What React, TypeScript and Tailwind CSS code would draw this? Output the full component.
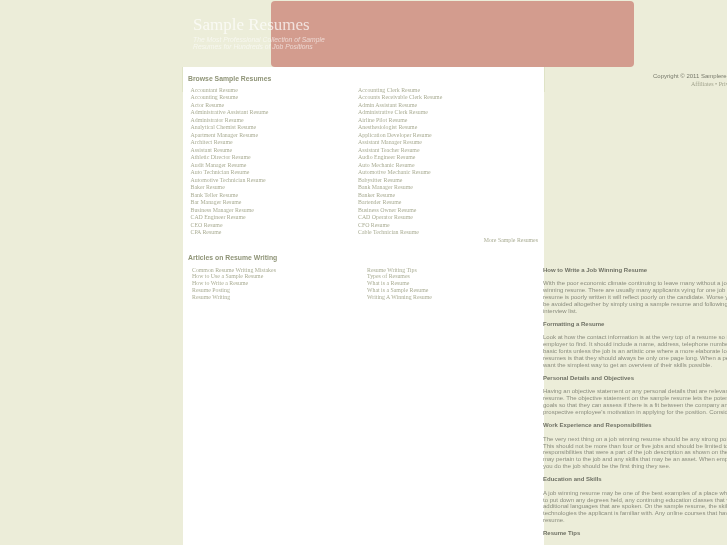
const left = [
  "Accountant Resume","Accounting Resume","Actor Resume","Administrative Assistant Resume","Administrator Resume","Analytical Chemist Resume","Apartment Manager Resume","Architect Resume","Assistant Resume","Athletic Director Resume","Audit Manager Resume","Auto Technician Resume","Automotive Technician Resume","Baker Resume","Bank Teller Resume","Bar Manager Resume","Business Manager Resume","CAD Engineer Resume","CEO Resume","CPA Resume",
];
const right = [
  "Accounting Clerk Resume","Accounts Receivable Clerk Resume","Admin Assistant Resume","Administrative Clerk Resume","Airline Pilot Resume","Anesthesiologist Resume","Application Developer Resume","Assistant Manager Resume","Assistant Teacher Resume","Audio Engineer Resume","Auto Mechanic Resume","Automotive Mechanic Resume","Babysitter Resume","Bank Manager Resume","Banker Resume","Bartender Resume","Business Owner Resume","CAD Operator Resume","CFO Resume","Cable Technician Resume",
];
const articlesLeft = ["Common Resume Writing Mistakes","How to Use a Sample Resume","How to Write a Resume","Resume Posting","Resume Writing"];
const articlesRight = ["Resume Writing Tips","Types of Resumes","What is a Resume","What is a Sample Resume","Writing A Winning Resume"];

const sections: { title: string; lines: string[] }[] = [
  { title: "How to Write a Job Winning Resume", lines: [
    "With the poor economic climate continuing to leave many without a job, it is vital to have a",
    "winning resume. There are usually many applicants vying for one job and if a person's",
    "resume is poorly written it will reflect poorly on the candidate. Worse yet it may well",
    "be avoided altogether by simply using a sample resume and following it to get on the",
    "interview list.",
  ]},
  { title: "Formatting a Resume", lines: [
    "Look at how the contact information is at the very top of a resume so it is easy for an",
    "employer to find. It should include a name, address, telephone number and email. Use",
    "basic fonts unless the job is an artistic one where a more elaborate look works. A rule for",
    "resumes is that they should always be only one page long. When a person reads it they",
    "want the simplest way to get an overview of their skills possible.",
  ]},
  { title: "Personal Details and Objectives", lines: [
    "Having an objective statement or any personal details that are relevant can help the",
    "resume. The objective statement on the sample resume lets the potential employer see",
    "goals so that they can assess if there is a fit between the company and the person and",
    "prospective employee's motivation in applying for the position. Consider this carefully.",
  ]},
  { title: "Work Experience and Responsibilities", lines: [
    "The very next thing on a job winning resume should be any strong points of experience.",
    "This should not be more than four or five jobs and should be limited to the main duties",
    "responsibilities that were a part of the job description as shown on the sample and what",
    "may pertain to the job and any skills that may be an asset. When employers look at what",
    "you do the job should be the first thing they see.",
  ]},
  { title: "Education and Skills", lines: [
    "A job winning resume may be one of the best examples of a place where it is important",
    "to put down any degrees held, any continuing education classes that were taken and any",
    "additional languages that are spoken. On the sample resume, the skills listed are the",
    "technologies the applicant is familiar with. Any online courses that have been taken help a",
    "resume.",
  ]},
  { title: "Resume Tips", lines: [
    "The sample resume is formatted so that any employer in any field can see it at a glance.",
  ]},
];

export default function App() {
  return (
    <div className="relative h-[545px] w-[727px] overflow-hidden bg-[#ecedd9] font-['Liberation_Sans',sans-serif]">
      <div className="ml-[271px] mt-px h-[66px] w-[363px] rounded-[4px] bg-[#d39c8e]" />

      <div className="absolute left-[193px] top-[15px] text-white blur-[0.3px]">
        <div className="font-['Liberation_Serif',serif] text-[17px] leading-[20.5px] opacity-70">Sample Resumes</div>
        <div className="text-[6.8px] italic leading-[7.5px] opacity-60">
          <div>The Most Professional Collection of Sample</div>
          <div>Resumes for Hundreds of Job Positions</div>
        </div>
      </div>

      <div className="flex">
        <main className="relative ml-[183px] h-[478px] w-[361px] shrink-0 bg-white pl-[5px] pr-[6px] pt-[7px]">
          <div className="absolute -left-px top-0 h-[25px] w-px bg-[#dfe3c6]" />
          <div className="absolute -right-px top-0 h-[25px] w-px bg-[#dfe3c6]" />
          <div className="blur-[0.3px]">
            <h2 className="text-[6.85px] font-bold leading-[9px] text-[#8f9477]">Browse Sample Resumes</h2>
            <div className="mt-[3.5px] grid grid-cols-[167.5px_1fr] pl-[2.5px] font-['Liberation_Serif',serif] text-[5.85px] leading-[7.5px] text-[#a9ac93]">
              <div>{left.map((t) => <div key={t}>{t}</div>)}</div>
              <div>{right.map((t) => <div key={t}>{t}</div>)}</div>
            </div>
            <div className="text-right font-['Liberation_Serif',serif] text-[5.85px] leading-[7.5px] text-[#a9ac93]">More Sample Resumes</div>
            <h2 className="mt-[9px] text-[6.85px] font-bold leading-[9px] text-[#8f9477]">Articles on Resume Writing</h2>
            <div className="mt-[4.5px] grid grid-cols-[175px_1fr] pl-[4px] font-['Liberation_Serif',serif] text-[5.85px] leading-[6.85px] text-[#a9ac93]">
              <div>{articlesLeft.map((t) => <div key={t}>{t}</div>)}</div>
              <div>{articlesRight.map((t) => <div key={t}>{t}</div>)}</div>
            </div>
          </div>
        </main>

        <aside className="-ml-px w-[184px] shrink-0 overflow-hidden">
          <div className="blur-[0.3px]">
            <div className="ml-[110px] mt-[5px] w-[120px] whitespace-nowrap text-[6px] leading-[8px] text-[#77796b]">Copyright © 2011 Sampleresumes.net</div>
            <div className="ml-[148px] w-[80px] whitespace-nowrap font-['Liberation_Serif',serif] text-[6px] leading-[8px] text-[#a0a28c]">Affiliates • Privacy Policy</div>
            <article className="mt-[178.5px] w-[270px]">
              {sections.map((s) => (
                <section key={s.title} className="mb-[6px]">
                  <h3 className="mb-[6.85px] text-[6px] font-bold leading-[7px] text-[#6f7165]">{s.title}</h3>
                  <div className="whitespace-nowrap text-[6px] leading-[6.85px] text-[#8a8c7e]">
                    {s.lines.map((l) => (
                      <div key={l}>{l}</div>
                    ))}
                  </div>
                </section>
              ))}
            </article>
          </div>
        </aside>
      </div>
    </div>
  );
}
